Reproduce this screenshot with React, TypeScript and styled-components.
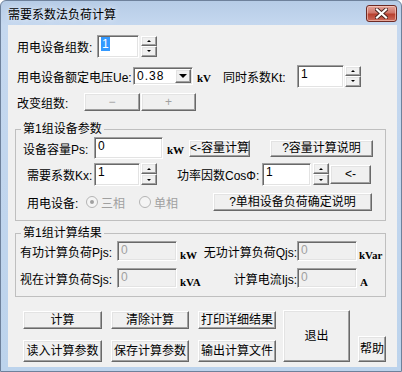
import styled, { createGlobalStyle } from 'styled-components';

const GlobalStyle = createGlobalStyle`
  html, body {
    margin: 0;
    padding: 0;
    background: #fff;
  }
  body {
    font-family: 'Liberation Sans', 'Noto Sans CJK SC', sans-serif;
    font-size: 12px;
    color: #000;
  }
`;

export default function App() {
  return (
    <>
      <GlobalStyle />
      <S.Window>
        <S.TitleBar>
          <S.Title>需要系数法负荷计算</S.Title>
          <S.CloseButton>
            <svg width='13' height='11' viewBox='0 0 13 11'>
              <path d='M2 1.5 L11 9.5 M11 1.5 L2 9.5' stroke='#4a2520' strokeWidth='4' strokeLinecap='square' />
              <path d='M2 1.5 L11 9.5 M11 1.5 L2 9.5' stroke='#fff' strokeWidth='2.2' strokeLinecap='square' />
            </svg>
          </S.CloseButton>
        </S.TitleBar>

        <S.Client>
          <S.Row $h={24} $mt={9} $pl={2}>
            <S.Label $w={80}>用电设备组数:</S.Label>
            <S.TextBox $w={42} $h={23}>
              <S.Selected>1</S.Selected>
            </S.TextBox>
            <Spin h={21} ml={2} />
          </S.Row>

          <S.Row $h={24} $mt={6} $pl={2}>
            <S.Label $w={116}>用电设备额定电压Ue:</S.Label>
            <S.Select>
              <S.SelectValue>0.38</S.SelectValue>
              <S.SelectArrow />
            </S.Select>
            <S.Unit $w={26} $ml={4}>kV</S.Unit>
            <S.Label $w={74}>同时系数Kt:</S.Label>
            <S.TextBox $w={47} $h={23}>1</S.TextBox>
            <Spin h={21} ml={1} />
          </S.Row>

          <S.Row $h={20} $mt={4} $pl={2}>
            <S.Label $w={67}>改变组数:</S.Label>
            <S.Button $w={56} $h={18} $dim>−</S.Button>
            <S.Button $w={55} $h={18} $ml={1} $dim>+</S.Button>
          </S.Row>

          <S.Group $mt={10}>
            <S.Legend>第1组设备参数</S.Legend>
            <S.Row $h={22} $mt={1} $pl={7}>
              <S.Label $w={71}>设备容量Ps:</S.Label>
              <S.TextBox $w={69} $h={22}>0</S.TextBox>
              <S.Unit $w={22} $ml={4}>kW</S.Unit>
              <S.Button $w={61} $h={17}>&lt;-容量计算</S.Button>
              <S.Button $w={103} $h={17} $ml={20}>?容量计算说明</S.Button>
            </S.Row>
            <S.Row $h={24} $mt={3} $pl={11}>
              <S.Label $w={67}>需要系数Kx:</S.Label>
              <S.TextBox $w={46} $h={23}>1</S.TextBox>
              <Spin h={22} ml={1} />
              <S.Label $w={85} $ml={20}>功率因数CosΦ:</S.Label>
              <S.TextBox $w={49} $h={23}>1</S.TextBox>
              <Spin h={22} ml={2} />
              <S.Button $w={41} $h={19} $ml={1}>&lt;-</S.Button>
            </S.Row>
            <S.Row $h={20} $mt={6} $pl={11}>
              <S.Label $w={59}>用电设备:</S.Label>
              <S.Radio $on />
              <S.Label $w={38} $ml={3} $dim>三相</S.Label>
              <S.Radio />
              <S.Label $w={59} $ml={3} $dim>单相</S.Label>
              <S.Button $w={159} $h={18}>?单相设备负荷确定说明</S.Button>
            </S.Row>
          </S.Group>

          <S.Group $mt={5}>
            <S.Legend>第1组计算结果</S.Legend>
            <S.Row $h={20} $mt={1} $pl={4}>
              <S.Label $w={97}>有功计算负荷Pjs:</S.Label>
              <S.TextBox $w={60} $h={20} $off>0</S.TextBox>
              <S.Unit $w={20} $ml={3} $low>kW</S.Unit>
              <S.Label $w={97} $right>无功计算负荷Qjs:</S.Label>
              <S.TextBox $w={60} $h={20} $off>0</S.TextBox>
              <S.Unit $w={26} $ml={2} $low>kVar</S.Unit>
            </S.Row>
            <S.Row $h={20} $mt={7} $pl={4}>
              <S.Label $w={97}>视在计算负荷Sjs:</S.Label>
              <S.TextBox $w={60} $h={20} $off>0</S.TextBox>
              <S.Unit $w={20} $ml={3} $low>kVA</S.Unit>
              <S.Label $w={97} $right>计算电流Ijs:</S.Label>
              <S.TextBox $w={60} $h={20} $off>0</S.TextBox>
              <S.Unit $w={20} $ml={3} $low>A</S.Unit>
            </S.Row>
          </S.Group>

          <S.Footer>
            <S.ButtonGrid>
              <S.Button $w={79} $h={18}>计算</S.Button>
              <S.Button $w={78} $h={18}>清除计算</S.Button>
              <S.Button $w={78} $h={18}>打印详细结果</S.Button>
              <S.Button $w={79} $h={22}>读入计算参数</S.Button>
              <S.Button $w={78} $h={22}>保存计算参数</S.Button>
              <S.Button $w={78} $h={22}>输出计算文件</S.Button>
            </S.ButtonGrid>
            <S.Button $w={67} $h={52} $ml={7}>退出</S.Button>
            <S.Button $w={28} $h={26} $ml={8}>帮助</S.Button>
          </S.Footer>
        </S.Client>
      </S.Window>
    </>
  );
}

function Spin({ h, ml }: { h: number; ml: number }) {
  return (
    <S.Spin $h={h} $ml={ml}>
      <S.SpinPart />
      <S.SpinPart $down />
    </S.Spin>
  );
}

const raised = `
  background: #f0f0f0;
  border: 1px solid;
  border-color: #fff #696969 #696969 #fff;
  box-shadow: inset -1px -1px 0 #a0a0a0, inset 1px 1px 0 #e3e3e3;
`;

const sunken = `
  border: 1px solid;
  border-color: #a0a0a0 #fff #fff #a0a0a0;
  box-shadow: inset 1px 1px 0 #696969, inset -1px -1px 0 #e3e3e3;
`;

const S = {
  Window: styled.div`
    width: 402px;
    height: 372px;
    box-sizing: border-box;
    border: 1px solid #6e819b;
    border-radius: 6px 6px 0 0;
    background: linear-gradient(#b6cce6, #c5d8ef 24px, #bcd3ec);
    display: flex;
    flex-direction: column;
    overflow: hidden;
  `,
  TitleBar: styled.div`
    height: 24px;
    flex: none;
    display: flex;
    align-items: center;
    justify-content: space-between;
    padding: 0 4px 0 7px;
  `,
  Title: styled.span`
    font-size: 12px;
    color: #000;
    text-shadow: 0 0 6px rgba(255, 255, 255, 0.9);
  `,
  CloseButton: styled.div`
    width: 31px;
    height: 17px;
    box-sizing: border-box;
    border: 1px solid #6d2a24;
    border-radius: 3px;
    background: linear-gradient(#e3a399, #d0766a 45%, #b8402f 55%, #cd6c5c);
    box-shadow: inset 0 0 0 1px rgba(255, 220, 210, 0.55);
    display: flex;
    align-items: center;
    justify-content: center;
  `,
  Client: styled.div`
    flex: 1;
    margin: 0 4px 4px 7px;
    padding-left: 7px;
    background: #f0f0f0;
    display: flex;
    flex-direction: column;
  `,
  Row: styled.div<{ $h: number; $mt: number; $pl?: number }>`
    display: flex;
    align-items: center;
    height: ${(p) => p.$h}px;
    margin-top: ${(p) => p.$mt}px;
    padding-left: ${(p) => p.$pl ?? 0}px;
  `,
  Label: styled.span<{ $w: number; $ml?: number; $right?: boolean; $dim?: boolean }>`
    flex: none;
    width: ${(p) => p.$w}px;
    margin-left: ${(p) => p.$ml ?? 0}px;
    text-align: ${(p) => (p.$right ? 'right' : 'left')};
    white-space: nowrap;
    color: ${(p) => (p.$dim ? '#a0a0a0' : '#000')};
  `,
  Unit: styled.span<{ $w: number; $ml?: number; $low?: boolean }>`
    flex: none;
    width: ${(p) => p.$w}px;
    margin-left: ${(p) => p.$ml ?? 0}px;
    margin-top: ${(p) => (p.$low ? 8 : 4)}px;
    font-family: 'Liberation Serif', serif;
    font-size: 11px;
    font-weight: bold;
    white-space: nowrap;
  `,
  TextBox: styled.div<{ $w: number; $h: number; $off?: boolean }>`
    flex: none;
    box-sizing: border-box;
    width: ${(p) => p.$w}px;
    height: ${(p) => p.$h}px;
    ${sunken}
    background: ${(p) => (p.$off ? '#f0f0f0' : '#fff')};
    color: ${(p) => (p.$off ? '#a0a0a0' : '#000')};
    padding: 2px 0 0 3px;
    line-height: 13px;
  `,
  Selected: styled.span`
    background: #3399ff;
    color: #fff;
    padding: 0 1px;
  `,
  Spin: styled.div<{ $h: number; $ml: number }>`
    flex: none;
    display: flex;
    flex-direction: column;
    width: 16px;
    height: ${(p) => p.$h}px;
    margin-left: ${(p) => p.$ml}px;
  `,
  SpinPart: styled.div<{ $down?: boolean }>`
    flex: 1;
    box-sizing: border-box;
    ${raised}
    display: flex;
    align-items: center;
    justify-content: center;
    &::after {
      content: '';
      border-left: 2px solid transparent;
      border-right: 2px solid transparent;
      ${(p) => (p.$down ? 'border-top: 2px solid #000;' : 'border-bottom: 2px solid #000;')}
    }
  `,
  Select: styled.div`
    flex: none;
    box-sizing: border-box;
    width: 60px;
    height: 18px;
    ${sunken}
    background: #fff;
    display: flex;
    padding: 1px;
  `,
  SelectValue: styled.span`
    flex: 1;
    padding-left: 2px;
    line-height: 14px;
    letter-spacing: 1px;
  `,
  SelectArrow: styled.span`
    flex: none;
    width: 16px;
    box-sizing: border-box;
    ${raised}
    display: flex;
    align-items: center;
    justify-content: center;
    &::after {
      content: '';
      border-left: 4px solid transparent;
      border-right: 4px solid transparent;
      border-top: 4px solid #000;
    }
  `,
  Button: styled.button<{ $w: number; $h: number; $ml?: number; $dim?: boolean }>`
    flex: none;
    box-sizing: border-box;
    width: ${(p) => p.$w}px;
    height: ${(p) => p.$h}px;
    margin: 0 0 0 ${(p) => p.$ml ?? 0}px;
    padding: 0;
    ${raised}
    font: 12px/1 'Liberation Sans', 'Noto Sans CJK SC', sans-serif;
    color: ${(p) => (p.$dim ? '#a0a0a0' : '#000')};
    display: flex;
    align-items: center;
    justify-content: center;
    white-space: nowrap;
  `,
  Group: styled.fieldset<{ $mt: number }>`
    box-sizing: border-box;
    width: 371px;
    margin: ${(p) => p.$mt}px 0 0 0;
    padding: 0 0 8px 0;
    border: 1px solid #bfbfbf;
    min-width: 0;
  `,
  Legend: styled.legend`
    margin-left: 5px;
    padding: 0 2px;
    font-size: 12px;
    line-height: 14px;
  `,
  Radio: styled.span<{ $on?: boolean }>`
    flex: none;
    box-sizing: border-box;
    width: 12px;
    height: 12px;
    border-radius: 50%;
    border: 1px solid #b4b4b4;
    background: #f4f4f4;
    display: flex;
    align-items: center;
    justify-content: center;
    &::after {
      content: '';
      width: 4px;
      height: 4px;
      border-radius: 50%;
      background: ${(p) => (p.$on ? '#a0a0a0' : 'transparent')};
    }
  `,
  Footer: styled.div`
    display: flex;
    align-items: flex-end;
    margin-top: 13px;
    padding-left: 8px;
  `,
  ButtonGrid: styled.div`
    display: grid;
    grid-template-columns: 79px 78px 78px;
    grid-template-rows: 18px 22px;
    column-gap: 9px;
    row-gap: 11px;
  `,
};
